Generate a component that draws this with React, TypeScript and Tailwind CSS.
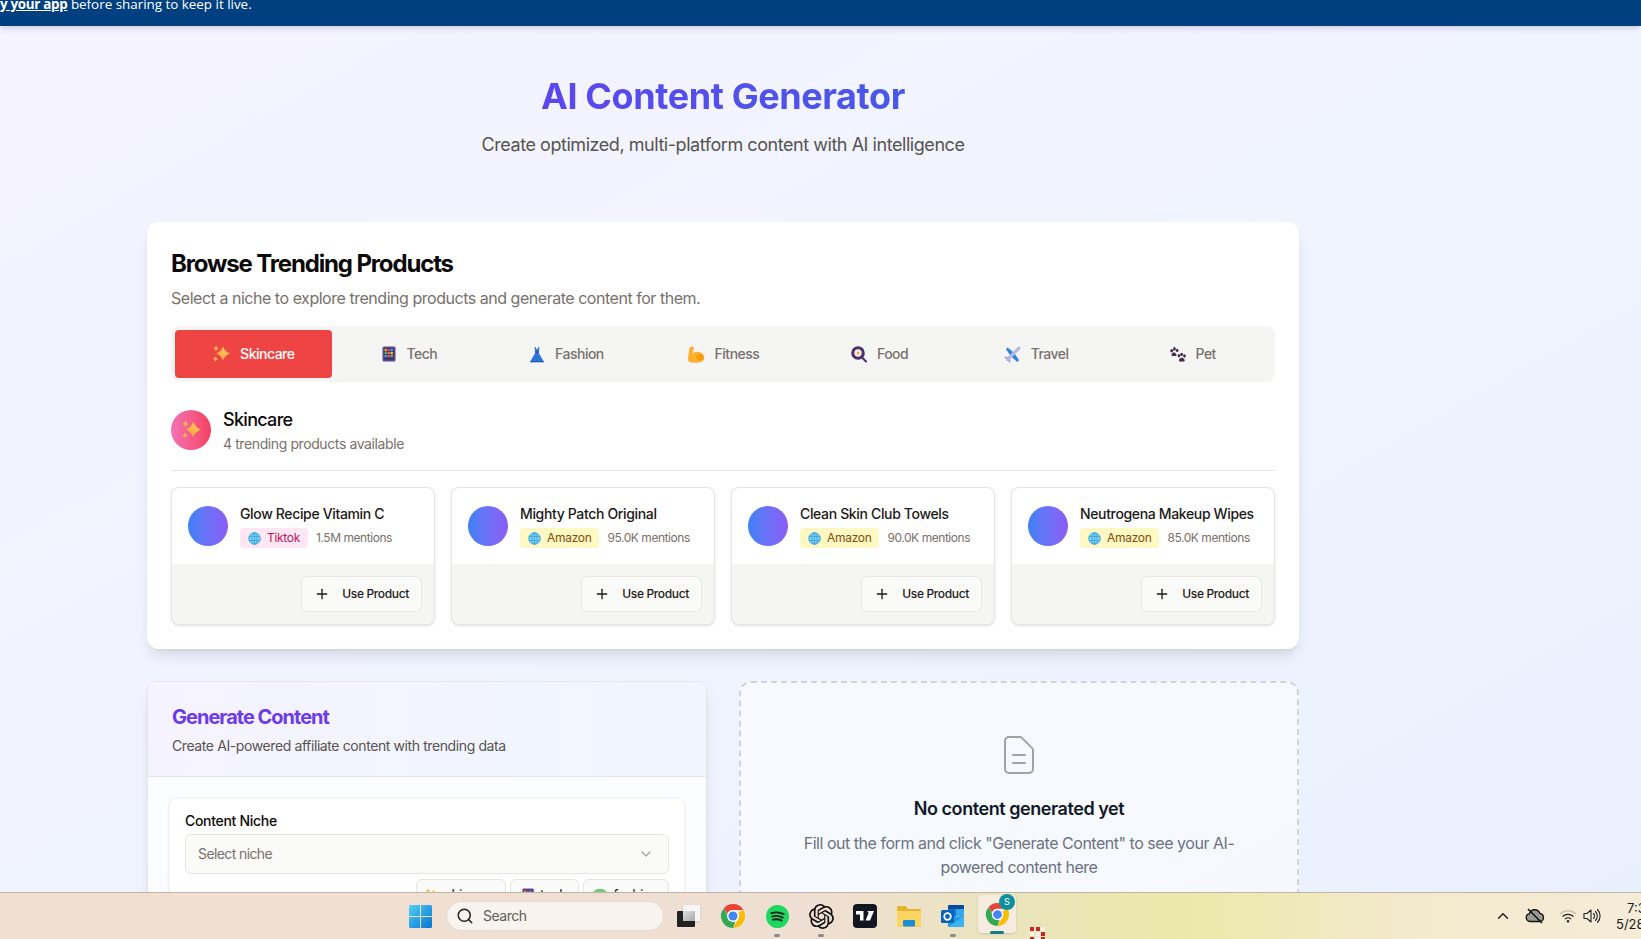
import React from 'react';
import { ChevronDown, ChevronUp, Plus, Search } from 'lucide-react';
import { SiOpenai } from 'react-icons/si';

const Sparkles = ({ size = 18 }: { size?: number }) => (
  <svg width={size} height={size} viewBox="0 0 18 18" className="shrink-0">
    <defs>
      <linearGradient id="spark" x1="0" y1="1" x2="1" y2="0">
        <stop offset="0" stopColor="#ff9a3c" />
        <stop offset="1" stopColor="#ffd35a" />
      </linearGradient>
    </defs>
    <path d="M11 1.500Q12.800 6.700 18 8.500 12.800 10.300 11 15.500 9.200 10.300 4 8.500 9.200 6.700 11 1.500z" fill="url(#spark)" />
    <path d="M4 .800Q4.700 2.800 6.700 3.500 4.700 4.200 4 6.200 3.300 4.200 1.300 3.500 3.300 2.800 4 .800z" fill="url(#spark)" />
    <path d="M3.500 11.500Q4.200 13.300 6 14 4.200 14.700 3.500 16.500 2.800 14.700 1 14 2.800 13.300 3.500 11.500z" fill="url(#spark)" />
  </svg>
);

const Abacus = ({ size = 16 }: { size?: number }) => (
  <svg width={(size * 14) / 16} height={size} viewBox="0 0 14 16" className="shrink-0">
    <rect x="0.500" y="0.500" width="13" height="15" rx="1.500" fill="#5b4a8f" />
    <rect x="2" y="2.500" width="10" height="11" fill="#3b2f63" />
    {[3, 6, 9].map((y, r) =>
      [2.500, 5.500, 8.500].map((x, c) => (
        <rect key={`${r}${c}`} x={x} y={y} width="2.400" height="2.300" fill={['#f9a825', '#e5484d', '#3fa7f5', '#4caf50', '#f06292', '#ffca28', '#42a5f5', '#ef5350', '#66bb6a'][r * 3 + c]} />
      ))
    )}
  </svg>
);

const Dress = () => (
  <svg width="16" height="17" viewBox="0 0 16 16" className="shrink-0">
    <path d="M5.600 0.500h1.100l.5 2h1.600l.5-2h1.100l-.3 3.500L9.800 6.500 15 15.500H1L6.200 6.500 5.900 4z" fill="#2f74d8" />
    <path d="M6.200 6.500h3.600l-.4-1.500H6.600z" fill="#1f55ad" />
    <path d="M1 15h14v.800H1z" fill="#174a9c" />
  </svg>
);

const Muscle = () => (
  <svg width="18" height="17" viewBox="0 0 18 17" className="shrink-0">
    <path d="M2.500 1.500C4 .3 6.500.500 7 1.500c.5 1 0 2-1 2.500L5.800 7.500C7 6 10 5.200 12.500 6c3 .9 5 3 4.800 6-.2 3-3 4.500-7 4.500H5C2.500 16.500 .8 15 1 12.500z" fill="#ffb02e" />
    <path d="M9 10c1.500-2 5-2.500 7-.500.8 1.500.5 3.500-1.500 4.500-2.500.8-5-.5-5.500-4z" fill="#f59a0c" />
    <path d="M1 14c1 1.800 3 2.500 5 2.500h5c-2 .5-8 .800-10-2.500z" fill="#f47f20" />
  </svg>
);

const Pan = () => (
  <svg width="16" height="17" viewBox="0 0 16 17" className="shrink-0">
    <circle cx="7" cy="7" r="6.800" fill="#4a2f6d" />
    <circle cx="7" cy="7" r="3.700" fill="#fbeee6" />
    <circle cx="7.200" cy="7" r="1.500" fill="#f9a825" />
    <path d="M11 11.500l4 4" stroke="#4a2f6d" strokeWidth="2" strokeLinecap="round" />
  </svg>
);

const Plane = () => (
  <svg width="17" height="17" viewBox="0 0 16 16" className="shrink-0">
    <path d="M9 6L3.500 1.500 1.800 2.800 6 9z" fill="#2f84dc" />
    <path d="M10 7l4.200 6.500-1.700 1.500L7 10z" fill="#2f84dc" />
    <path d="M5 10.500L1 10l-.5 1.200L4 13z" fill="#8f96dc" />
    <path d="M5.500 11L6 15l-1 .6L3 12z" fill="#8f96dc" />
    <path d="M14 2L3.500 12.500" stroke="#b4b8e8" strokeWidth="3" strokeLinecap="round" />
  </svg>
);

const Paw = () => (
  <svg width="16" height="15" viewBox="0 0 16 15" fill="#43304f" className="shrink-0">
    <ellipse cx="1.700" cy="3.700" rx="1.400" ry="1.800" />
    <ellipse cx="4.400" cy="1.900" rx="1.400" ry="1.800" />
    <ellipse cx="7.200" cy="3.400" rx="1.300" ry="1.700" />
    <path d="M1.800 7c.9-2 3.300-2 4.400 0 .7 1.300.3 2.400-1 2.100-.8-.2-1.400-.2-2.200 0-1.400.3-1.800-.8-1.200-2.100z" />
    <ellipse cx="9" cy="8.700" rx="1.300" ry="1.700" />
    <ellipse cx="11.700" cy="7.400" rx="1.400" ry="1.700" />
    <ellipse cx="14.500" cy="9" rx="1.300" ry="1.700" />
    <path d="M9 12.800c.9-2.600 4.500-2.800 5.600 0 .4 1.300-.4 2.200-1.500 1.800-.8-.2-1.500-.2-2.300 0-1.300.4-2.100-.6-1.800-1.800z" />
  </svg>
);

const Shirt = () => (
  <svg width="14" height="14" viewBox="0 0 14 14" fill="#7cc47f" className="shrink-0">
    <path d="M4 1h6l4 3-2 2.500-1-.7V13H3V5.800l-1 .7L0 4z" />
  </svg>
);

const Globe = () => (
  <svg width="13" height="13" viewBox="0 0 13 13" fill="none" className="shrink-0">
    <circle cx="6.500" cy="6.500" r="6" fill="#7fd0f2" />
    <g stroke="#3aa3dc" strokeWidth="0.800">
      <circle cx="6.500" cy="6.500" r="5.800" />
      <ellipse cx="6.500" cy="6.500" rx="2.600" ry="5.800" />
      <path d="M1 4.500h11M1 8.500h11M6.500 .7v11.600" />
    </g>
  </svg>
);

const tabs = [
  { label: 'Skincare', icon: <Sparkles /> },
  { label: 'Tech', icon: <Abacus /> },
  { label: 'Fashion', icon: <Dress /> },
  { label: 'Fitness', icon: <Muscle /> },
  { label: 'Food', icon: <Pan /> },
  { label: 'Travel', icon: <Plane /> },
  { label: 'Pet', icon: <Paw /> },
];

const products = [
  { name: 'Glow Recipe Vitamin C', source: 'Tiktok', mentions: '1.5M mentions', pill: 'bg-[#fce7f3] text-[#be185d]' },
  { name: 'Mighty Patch Original', source: 'Amazon', mentions: '95.0K mentions', pill: 'bg-[#fef9c3] text-[#854d0e]' },
  { name: 'Clean Skin Club Towels', source: 'Amazon', mentions: '90.0K mentions', pill: 'bg-[#fef9c3] text-[#854d0e]' },
  { name: 'Neutrogena Makeup Wipes', source: 'Amazon', mentions: '85.0K mentions', pill: 'bg-[#fef9c3] text-[#854d0e]' },
];

const chips = [
  { label: 'skincare', width: 'w-[90px]', icon: <Sparkles size={14} /> },
  { label: 'tech', width: 'w-[69px]', icon: <Abacus size={14} /> },
  { label: 'fashion', width: 'w-[86px]', icon: <Shirt /> },
];

const ProductCard = ({ product }: { product: (typeof products)[number] }) => (
  <div className="rounded-lg border border-[#e7e5e4] bg-white overflow-hidden shadow-sm">
    <div className="flex items-center gap-3 p-4 h-[76px]">
      <div className="w-10 h-10 rounded-full shrink-0 bg-gradient-to-r from-[#3b82f6] to-[#8b5cf6]" />
      <div className="min-w-0">
        <div className="text-sm leading-5 font-medium text-[#1c1917] whitespace-nowrap tracking-[-0.35px]">{product.name}</div>
        <div className="flex items-center gap-2 mt-1">
          <span className={`flex items-center gap-[6px] h-5 px-2 rounded text-xs tracking-[-0.3px] ${product.pill}`}>
            <Globe />
            {product.source}
          </span>
          <span className="text-xs text-[#78716c] whitespace-nowrap tracking-[-0.45px]">{product.mentions}</span>
        </div>
      </div>
    </div>
    <div className="flex justify-end p-3 bg-[#f5f5f4]">
      <button className="flex items-center gap-3 h-9 px-3 rounded-md border border-[#e7e5e4] bg-[#fafaf9] text-xs font-medium text-[#1c1917] tracking-[-0.35px]">
        <Plus size={16} />
        Use Product
      </button>
    </div>
  </div>
);

const Chrome = ({ size = 26 }: { size?: number }) => (
  <svg width={size} height={size} viewBox="0 0 24 24">
    <path d="M12 1a11 11 0 0 1 9.530 5.500H12a5.500 5.500 0 0 0-5.200 3.700L3.600 4.800A11 11 0 0 1 12 1z" fill="#ea4335" />
    <path d="M21.530 6.500A11 11 0 0 1 12 23l4.760-8.250A5.500 5.500 0 0 0 16.760 9.250z" fill="#fbbc04" />
    <path d="M12 23A11 11 0 0 1 3.600 4.800l4.600 9.100A5.500 5.500 0 0 0 14 17.100z" fill="#34a853" />
    <circle cx="12" cy="12" r="5.500" fill="#fff" />
    <circle cx="12" cy="12" r="4.200" fill="#4285f4" />
  </svg>
);

const TaskIcon = ({ children, dot }: { children: React.ReactNode; dot?: boolean }) => (
  <div className="relative w-[44px] h-[47px] flex items-center justify-center shrink-0">
    {children}
    {dot && <span className="absolute bottom-[3px] left-1/2 -translate-x-1/2 w-[6px] h-[3px] rounded-full bg-[#8a8a8a]" />}
  </div>
);

const Taskbar = () => (
  <div className="relative shrink-0 h-[47px] flex items-center border-t border-[#bdb6a8] pl-[409px] bg-[linear-gradient(90deg,#f1e0d2_0%,#efdfd2_50%,#e9e6b4_66%,#ebe9a8_72%,#f3e9cb_85%,#f5ecd8_100%)] font-['Inter',sans-serif] overflow-hidden">
    {/* Windows logo */}
    <svg width="23" height="23" viewBox="0 0 23 23" className="shrink-0">
      <defs>
        <linearGradient id="win" x1="0" y1="0" x2="1" y2="1">
          <stop offset="0" stopColor="#4fd0f7" />
          <stop offset="1" stopColor="#0a72cf" />
        </linearGradient>
      </defs>
      <path d="M0 1.500A1.500 1.500 0 0 1 1.500 0H11v11H0zM12 0h9.500A1.500 1.500 0 0 1 23 1.500V11H12zM0 12h11v11H1.500A1.500 1.500 0 0 1 0 21.500zM12 12h11v9.500a1.500 1.500 0 0 1-1.500 1.500H12z" fill="url(#win)" />
    </svg>
    <div className="ml-[14px] w-[218px] h-[30px] rounded-full bg-[#f8f3ee] border border-[#e3dbd2] flex items-center pl-[9px] gap-[9px] text-sm text-[#5f5c59] tracking-[-0.5px] shrink-0">
      <Search size={18} className="text-[#222]" />
      Search
    </div>
    {/* task view */}
    <div className="relative w-[44px] h-[47px] ml-[4px] shrink-0">
      <div className="absolute left-[15px] top-[12px] w-[17px] h-[16px] bg-[#f6f6f6] rounded-[1px] shadow-sm" />
      <div className="absolute left-[9px] top-[18px] w-[18px] h-[16px] bg-[#222] rounded-[1px]" />
      <div className="absolute left-[15px] top-[18px] w-[12px] h-[10px] bg-gradient-to-br from-[#e0e0e0] to-[#a8a8a8]" />
    </div>
    <div className="flex ml-[-1px]">
      <TaskIcon><Chrome /></TaskIcon>
      <TaskIcon dot>
        <svg width="23" height="23" viewBox="0 0 24 24">
          <circle cx="12" cy="12" r="12" fill="#1ed760" />
          <path d="M5.500 8.500c4.500-1.300 9-1 13 1M6.500 12c3.800-1 7.800-.7 11 1.200M7.200 15.300c3.200-.8 6.400-.5 9.200 1" stroke="#14241a" strokeWidth="1.900" strokeLinecap="round" fill="none" />
        </svg>
      </TaskIcon>
      <TaskIcon dot>
        <SiOpenai size={25} color="#111111" />
      </TaskIcon>
      <TaskIcon>
        <div className="w-[24px] h-[24px] rounded-[4px] bg-[#131722] flex items-center justify-center">
          <svg width="18" height="10" viewBox="0 0 18 10" fill="#fff">
            <path d="M0 0h7.500v9.500H4V3.500H0zM8.500 0h3l-0 0a1.800 1.800 0 1 1 0 .1zM13.500 0H18l-4 9.500H9.500z" />
          </svg>
        </div>
      </TaskIcon>
      <TaskIcon>
        <svg width="24" height="24" viewBox="0 0 24 24">
          <path d="M0 3.500A1.500 1.500 0 0 1 1.500 2h7L11 5h11.500A1.500 1.500 0 0 1 24 6.500V21a1.500 1.500 0 0 1-1.500 1.500h-21A1.500 1.500 0 0 1 0 21z" fill="#e8b32e" />
          <path d="M0 7h24v14a1.500 1.500 0 0 1-1.500 1.500h-21A1.500 1.500 0 0 1 0 21z" fill="#fcd462" />
          <rect x="6" y="16" width="12" height="6.500" rx="1" fill="#1b8fd6" />
        </svg>
      </TaskIcon>
      <TaskIcon dot>
        <svg width="26" height="26" viewBox="0 0 26 26">
          <path d="M9 2h14a1 1 0 0 1 1 1v3H8V3a1 1 0 0 1 1-1z" fill="#0a4a9e" />
          <rect x="8" y="6" width="8" height="7" fill="#0f78d4" />
          <rect x="16" y="6" width="8" height="7" fill="#35a8ec" />
          <rect x="8" y="13" width="8" height="7" fill="#1c8fe0" />
          <path d="M8 14l16-1v10a1 1 0 0 1-1 1H9a1 1 0 0 1-1-1z" fill="#1e9be8" />
          <path d="M8 24l16-11v10a1 1 0 0 1-1 1z" fill="#3eb2f2" />
          <rect x="1" y="7" width="13" height="13" rx="1.500" fill="#0a63b8" />
          <circle cx="7.500" cy="13.500" r="3.300" fill="none" stroke="#fff" strokeWidth="1.700" />
        </svg>
      </TaskIcon>
      <div className="relative w-[38px] h-[38px] ml-[3px] mt-[-4px] self-center rounded bg-[#f5ebdf] shadow-sm flex items-center justify-center shrink-0">
        <Chrome size={25} />
        <span className="absolute -top-[1px] right-[1px] w-[16px] h-[16px] rounded-full bg-[#0f8f9c] text-white text-[9px] leading-[16px] text-center">S</span>
        <span className="absolute bottom-[-1px] left-[12px] w-[14px] h-[3px] rounded-full bg-[#0f7d8c]" />
      </div>
      <div className="absolute left-[1030px] top-[34px] w-[16px] grid grid-cols-3 gap-[1px]">
        {['#c62828', '#c62828', '#f2f2f2', '#f2f2f2', '#f2f2f2', '#c62828', '#c62828', '#f2f2f2', '#c62828'].map((c, i) => (
          <span key={i} className="w-[4px] h-[4px]" style={{ backgroundColor: c }} />
        ))}
      </div>
    </div>
    {/* system tray */}
    <div className="ml-auto flex items-center text-[#1a1a1a] w-[147px] shrink-0">
      <ChevronUp size={18} strokeWidth={1.800} className="shrink-0" />
      <svg width="20" height="16" viewBox="0 0 20 16" className="ml-[13px] shrink-0">
        <path d="M5 13.500a4 4 0 0 1-.6-7.900A5.500 5.500 0 0 1 14.800 5.300 4.200 4.200 0 0 1 15.500 13.500z" fill="#9a9a94" stroke="#111" strokeWidth="1.300" />
        <path d="M3 1l14 14" stroke="#111" strokeWidth="1.600" />
      </svg>
      <svg width="18" height="16" viewBox="0 0 18 16" fill="none" className="ml-[14px] shrink-0">
        <path d="M1 6a11.500 11.500 0 0 1 16 0" stroke="#bdb8a8" strokeWidth="1.200" />
        <path d="M3.500 8.500a8 8 0 0 1 11 0" stroke="#222" strokeWidth="1.200" />
        <path d="M6 11a4.300 4.300 0 0 1 6 0" stroke="#222" strokeWidth="1.200" />
        <circle cx="9" cy="13.300" r="1.200" fill="#222" />
      </svg>
      <svg width="18" height="16" viewBox="0 0 18 16" fill="none" stroke="#222" strokeWidth="1.100" className="ml-[6px] shrink-0">
        <path d="M1 5.500h3L8 2v12l-4-3.500H1z" strokeLinejoin="round" />
        <path d="M10.500 5.500a3.500 3.500 0 0 1 0 5M12.500 3.500a6.500 6.500 0 0 1 0 9M14.500 1.500a9.500 9.500 0 0 1 0 13" strokeLinecap="round" />
      </svg>
      <div className="ml-[15px] text-[13px] leading-4 whitespace-nowrap shrink-0">
        <div className="pl-[11px]">7:3</div>
        <div>5/28/</div>
      </div>
    </div>
  </div>
);

export default function App() {
  return (
    <div className="h-screen flex flex-col overflow-hidden font-['Inter',sans-serif] bg-gradient-to-br from-[#f5f3ff] via-[#f0f4ff] to-[#e9f0fd]">
      <div className="relative z-10 shrink-0 h-[26px] overflow-hidden bg-[#004080] shadow-md text-[13.400px] leading-[8px] text-white whitespace-nowrap font-['Open_Sans',sans-serif]">
        <span className="font-bold underline tracking-[-0.3px]">y your app</span> before sharing to keep it live.
      </div>

      <main className="flex-1 min-h-0 overflow-hidden">
        <div className="ml-[147px] w-[1152px] pt-[50px]">
          <header className="text-center">
            <h1 className="text-4xl leading-10 font-bold tracking-[-0.4px] bg-gradient-to-r from-[#5b46ee] to-[#4858ea] bg-clip-text text-transparent w-fit mx-auto">AI Content Generator</h1>
            <p className="mt-[15px] text-lg leading-7 text-[#57534e] tracking-[-0.45px]">Create optimized, multi-platform content with AI intelligence</p>
          </header>

          <section className="mt-[63px] rounded-xl bg-white p-6 shadow-lg">
            <h2 className="pt-[2px] text-2xl leading-8 font-bold text-[#0c0a09] tracking-[-1.15px]">Browse Trending Products</h2>
            <p className="mt-[6px] text-base leading-6 text-[#78716c] tracking-[-0.47px]">Select a niche to explore trending products and generate content for them.</p>

            <div className="mt-4 grid grid-cols-7 p-1 rounded-lg bg-[#f5f5f4]">
              {tabs.map((tab, i) => (
                <div key={tab.label} className={`h-12 flex items-center justify-center gap-[10px] rounded text-sm font-medium tracking-[-0.5px] ${i === 0 ? 'bg-[#ef4444] text-white' : 'text-[#78716c]'}`}>
                  {tab.icon}
                  {tab.label}
                </div>
              ))}
            </div>

            <div className="mt-6 pb-4 flex items-center gap-3 border-b border-[#e7e5e4]">
              <div className="w-10 h-10 rounded-full bg-gradient-to-r from-[#f472b6] to-[#f43f5e] flex items-center justify-center">
                <Sparkles size={20} />
              </div>
              <div>
                <div className="text-lg leading-7 font-medium text-[#0c0a09] tracking-[-0.7px]">Skincare</div>
                <div className="text-sm leading-5 text-[#78716c] tracking-[-0.4px]">4 trending products available</div>
              </div>
            </div>

            <div className="mt-4 grid grid-cols-4 gap-4">
              {products.map((p) => (
                <ProductCard key={p.name} product={p} />
              ))}
            </div>
          </section>

          <div className="mt-8 grid grid-cols-2 gap-8">
            <section className="rounded-lg border border-[#e7e5e4] bg-[#fbfcff] shadow-lg overflow-hidden">
              <div className="px-6 pt-[21px] h-[95px] border-b border-[#e7e5e4] bg-gradient-to-r from-[#f5f3ff] to-[#eff6ff]">
                <h3 className="text-xl leading-7 font-bold text-[#6d3be8] tracking-[-1px]">Generate Content</h3>
                <p className="mt-[5px] text-sm leading-5 text-[#57534e] tracking-[-0.4px]">Create AI-powered affiliate content with trending data</p>
              </div>
              <div className="p-[21px]">
                <div className="rounded-lg bg-white border border-[#f5f5f4] shadow-sm px-[15px] pt-[12px] pb-[15px]">
                  <label className="block text-sm leading-5 font-medium text-[#0c0a09] tracking-[-0.3px]">Content Niche</label>
                  <div className="mt-[3px] h-10 rounded-md border border-[#e7e5e4] bg-[#fafaf9] flex items-center justify-between pl-3 pr-[14px] text-sm text-[#78716c] tracking-[-0.6px]">
                    Select niche
                    <ChevronDown size={16} className="text-[#a8a29e]" />
                  </div>
                  <div className="mt-[5px] flex justify-end gap-[4px]">
                    {chips.map((c) => (
                      <span key={c.label} className={`flex items-center justify-center gap-[6px] h-8 rounded-md border border-[#e7e5e4] bg-[#fafaf9] text-sm text-[#1c1917] tracking-[-0.4px] ${c.width}`}>
                        {c.icon}
                        {c.label}
                      </span>
                    ))}
                  </div>
                </div>
              </div>
            </section>

            <section className="rounded-xl border-2 border-dashed border-[#d1d5db] bg-white/50 pt-12 px-12 pb-12 text-center">
              <svg width="48" height="48" viewBox="0 0 24 24" fill="none" stroke="#9ca3af" strokeWidth="1" strokeLinecap="round" strokeLinejoin="round" className="mx-auto">
                <path d="M9 12h6m-6 4h6m2 5H7a2 2 0 01-2-2V5a2 2 0 012-2h5.586a1 1 0 01.707.293l5.414 5.414a1 1 0 01.293.707V19a2 2 0 01-2 2z" />
              </svg>
              <h3 className="mt-4 text-lg leading-7 font-semibold text-[#111827] tracking-[-0.44px]">No content generated yet</h3>
              <p className="mt-2 mx-auto max-w-md text-base leading-6 text-[#6b7280] tracking-[-0.47px]">Fill out the form and click "Generate Content" to see your AI-powered content here</p>
            </section>
          </div>
        </div>
      </main>

      <Taskbar />
    </div>
  );
}
